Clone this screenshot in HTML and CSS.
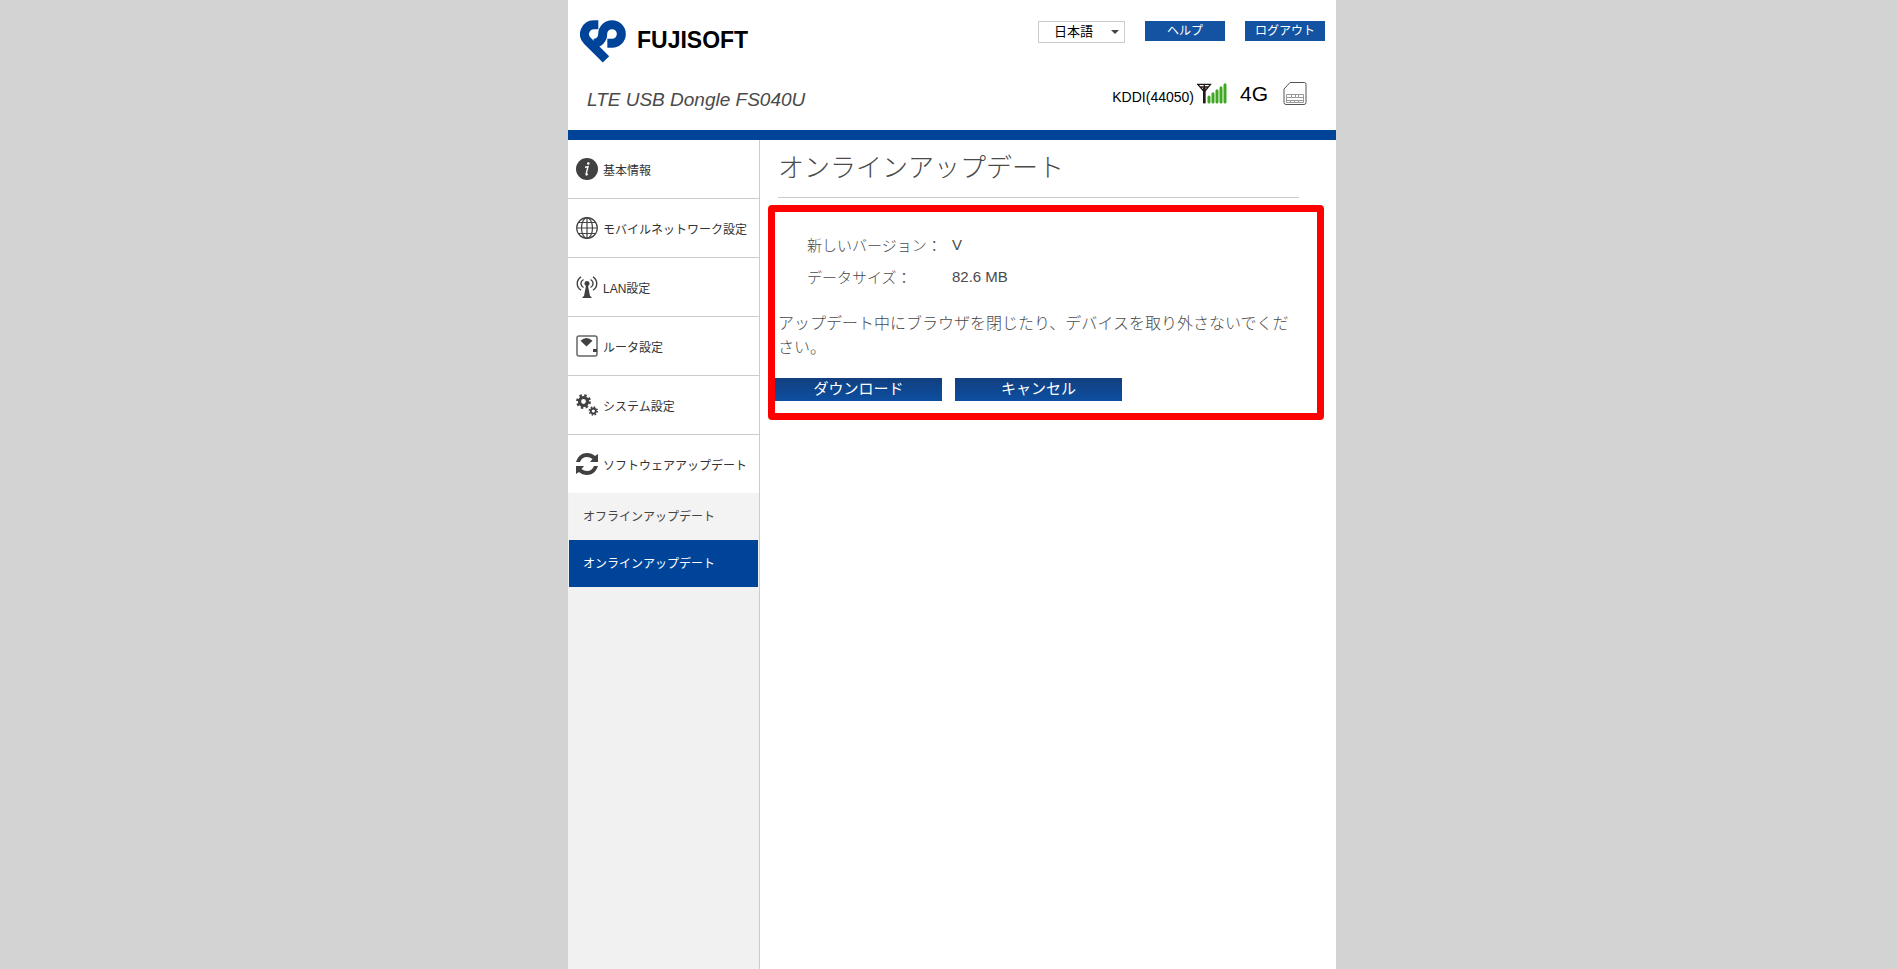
FILE: index.html
```html
<!DOCTYPE html>
<html lang="ja">
<head>
  <meta charset="UTF-8">
  <title>LTE USB Dongle FS040U</title>
  <meta name="viewport" content="width=device-width, initial-scale=1.0">
  <link rel="stylesheet" href="styles.css">
</head>
<body>
  <div class="page">
    <header class="header">
      <div class="header-top">
        <a href="#" class="logo">
          <svg width="46" height="43" viewBox="0 0 138 129" aria-hidden="true" fill="none" stroke="#004499" stroke-width="27">
            <path d="M55 14H42a28 28 0 0 0-20 48l56 56"/>
            <path d="M82 70h14a28 28 0 0 0 0-56a28 28 0 0 0-28 28a27 27 0 0 1-27 28"/>
          </svg>
          <span>FUJISOFT</span>
        </a>
        <div class="header-tools">
          <div class="lang">
            <select id="langSelect" aria-label="言語">
              <option>日本語</option>
              <option>English</option>
            </select>
          </div>
          <button class="small-btn" type="button">ヘルプ</button>
          <button class="small-btn" type="button">ログアウト</button>
        </div>
      </div>
      <div class="header-status">
        <div class="product">LTE USB Dongle FS040U</div>
        <div class="status">
          <span class="carrier">KDDI(44050)</span>
          <svg class="signal" width="30" height="21" viewBox="0 0 90 63" aria-hidden="true">
            <path d="M0 4h43M3 5l17 19M40 5L24 24M22 3v20M10 12h24" fill="none" stroke="#231815" stroke-width="4"/>
            <path d="M22 14v47" stroke="#231815" stroke-width="8"/>
            <path d="M36 42v15M48 32v25M60 23v34M72 14v43M84 5v52" stroke="#3fa720" stroke-width="9" stroke-linecap="round"/>
          </svg>
          <span class="network">4G</span>
          <svg width="24" height="24" viewBox="0 0 24 24" fill="none" stroke="#555" aria-hidden="true">
            <path d="M7 1.500h14.500q1.500 0 1.500 2v18q0 2-2 2h-18q-2 0-2-2V8z"/>
            <path d="M3.500 13.500h17v8h-17zM3.500 16.500h5v-3M12.500 16.500v-3M8.500 16.500h7v-3M15.500 16.500h5M3.500 19.500h17M7.500 19.500v2M11.500 19.500v2M15.500 19.500v2" stroke="#999"/>
          </svg>
        </div>
      </div>
    </header>

    <div class="content">
      <nav class="sidebar">
        <a href="#" class="menu-item">
          <svg width="22" height="22" viewBox="0 0 22 22">
            <circle cx="11" cy="11" r="11" fill="#414141"/>
            <circle cx="12.300" cy="5.500" r="1.300" fill="#fff"/>
            <path d="M9 9.200l3-.5-1.900 7.500q-.2 1 .5.700l1.300-1" fill="none" stroke="#fff" stroke-width="1.400"/>
          </svg>
          <span>基本情報</span>
        </a>
        <a href="#" class="menu-item">
          <svg width="22" height="22" viewBox="0 0 22 22" fill="none" stroke="#414141" stroke-width="1.200">
            <circle cx="11" cy="11" r="10.300"/>
            <ellipse cx="11" cy="11" rx="5.500" ry="10.300"/>
            <path d="M11 1v20M1 11h20M2.500 5.500h17M2.500 16.500h17"/>
          </svg>
          <span>モバイルネットワーク設定</span>
        </a>
        <a href="#" class="menu-item">
          <svg width="22" height="22" viewBox="0 0 22 22" fill="none" stroke="#414141" stroke-width="1.400">
            <path d="M5 .800C0 4 0 11 5 14.200M7.500 3.500c-3.500 2-3.500 6 0 8M17 .800c5 3.200 5 10.200 0 13.400M14.500 3.500c3.500 2 3.500 6 0 8"/>
            <circle cx="11" cy="7.500" r="2.500" fill="#414141" stroke="none"/>
            <path d="M10.300 8h1.400l2.300 12 1.500 1v1h-9v-1l1.500-1z" fill="#414141" stroke="none"/>
          </svg>
          <span>LAN設定</span>
        </a>
        <a href="#" class="menu-item">
          <svg width="22" height="22" viewBox="0 0 22 22">
            <rect x="1" y="1" width="20" height="20" rx="2" fill="none" stroke="#666" stroke-width="1.500"/>
            <path d="M4.500 5.800Q10.500 0 16.500 5.800L10.500 11.500z" fill="#414141"/>
            <rect x="17" y="14" width="4" height="3" fill="#414141"/>
          </svg>
          <span>ルータ設定</span>
        </a>
        <a href="#" class="menu-item">
          <svg width="22" height="22" viewBox="0 0 22 22" fill="none" stroke="#414141">
            <circle cx="7.500" cy="7.500" r="4" stroke-width="3.200"/>
            <circle cx="7.500" cy="7.500" r="6.200" stroke-width="2.400" stroke-dasharray="2.435"/>
            <circle cx="17.300" cy="17" r="2.500" stroke-width="1.800"/>
            <circle cx="17.300" cy="17" r="3.900" stroke-width="1.600" stroke-dasharray="1.532"/>
          </svg>
          <span>システム設定</span>
        </a>
        <a href="#" class="menu-item open">
          <svg width="22" height="22" viewBox="0 0 22 22" fill="#414141">
            <path d="M0 9C2 3 6 0 11 0c3 0 6 1 8 3l3-2v8h-8l2.500-3Q14 4 11 4 6 4 4 9z"/>
            <path d="M22 13c-2 6-6 9-11 9-3 0-6-1-8-3l-3 2v-8h8l-2.500 3Q8 18 11 18q5 0 7-5z"/>
          </svg>
          <span>ソフトウェアアップデート</span>
        </a>
        <a href="#" class="sub-item">オフラインアップデート</a>
        <a href="#" class="sub-item active">オンラインアップデート</a>
      </nav>

      <main class="main">
        <h1>オンラインアップデート</h1>
        <section class="update-box">
          <table class="info">
            <tr>
              <th scope="row">新しいバージョン：</th>
              <td>V</td>
            </tr>
            <tr>
              <th scope="row">データサイズ：</th>
              <td>82.6 MB</td>
            </tr>
          </table>
          <p>アップデート中にブラウザを閉じたり、デバイスを取り外さないでください。</p>
          <div class="actions">
            <button class="main-btn" type="button">ダウンロード</button>
            <button class="main-btn" type="button">キャンセル</button>
          </div>
        </section>
      </main>
    </div>
  </div>
</body>
</html>
```
FILE: styles.css
```css
:root {
  --blue: #004499;
  --line: #cccccc;
  --text: #4a4a4a;
}

* {
  box-sizing: border-box;
}

body {
  margin: 0;
  padding-left: 6px;
  background: #d3d3d3;
  color: var(--text);
  font-family: "Liberation Sans", "Noto Sans CJK JP", sans-serif;
}

.page {
  display: flex;
  flex-direction: column;
  max-width: 768px;
  min-height: 100vh;
  margin: 0 auto;
  background: #fff;
}

/* header */
.header {
  border-bottom: 10px solid var(--blue);
}

.header-top {
  display: flex;
  justify-content: space-between;
  align-items: flex-start;
  padding: 20px 11px 0 12px;
}

.logo {
  display: flex;
  align-items: center;
  gap: 11px;
  color: #000;
  font-size: 23px;
  font-weight: bold;
  line-height: 40px;
  text-decoration: none;
}

.logo span {
  padding-bottom: 3px;
}

.header-tools {
  display: flex;
  gap: 20px;
  padding-top: 1px;
}

.lang {
  position: relative;
}

.lang::after {
  content: "";
  position: absolute;
  top: 9px;
  right: 6px;
  border: 4px solid transparent;
  border-top-color: #444;
  border-bottom: none;
  pointer-events: none;
}

.lang select {
  display: block;
  width: 87px;
  height: 22px;
  padding: 0 15px 2px;
  border: 1px solid var(--line);
  border-radius: 0;
  background: #fff;
  color: #000;
  font-family: inherit;
  font-size: 13px;
  appearance: none;
}

.small-btn {
  width: 80px;
  height: 20px;
  padding: 0;
  border: none;
  background: #1453a1;
  color: #fff;
  font-family: inherit;
  font-size: 12px;
  line-height: 18px;
  cursor: pointer;
}

.header-status {
  display: flex;
  justify-content: space-between;
  height: 67px;
  padding: 18px 29px 0 19px;
}

.product {
  padding-top: 8px;
  font-size: 19px;
  font-style: italic;
  line-height: 22px;
}

.status {
  display: flex;
  align-items: center;
  height: 24px;
  color: #000;
}

.carrier {
  padding-top: 8px;
  font-size: 14px;
}

.signal {
  margin: 0 13px 0 3px;
}

.network {
  padding-top: 2px;
  margin-right: 15px;
  font-size: 21px;
}

/* sidebar */
.content {
  display: flex;
  flex: 1;
}

.sidebar {
  flex: 0 0 192px;
  border-right: 1px solid var(--line);
  background: #f1f1f1;
  font-size: 12px;
}

.menu-item {
  display: flex;
  align-items: center;
  gap: 5px;
  height: 59px;
  padding-left: 8px;
  border-bottom: 1px solid var(--line);
  background: #fff;
  color: #333;
  text-decoration: none;
}

.menu-item.open {
  height: 58px;
  border-bottom: none;
}

.sub-item {
  display: block;
  height: 47px;
  margin: 0 1px;
  padding-left: 14px;
  background: #f3f3f3;
  color: #444;
  line-height: 48px;
  text-decoration: none;
}

.sub-item.active {
  background: var(--blue);
  color: #fff;
}

/* main */
.main {
  flex: 1;
  min-width: 0;
  padding: 0 12px 0 8px;
  font-weight: 300;
}

h1 {
  margin: 0 25px 7px 10px;
  padding: 4px 0 5px;
  border-bottom: 1px solid var(--line);
  font-size: 26px;
  font-weight: 300;
  line-height: 48px;
}

.update-box {
  padding: 16px 23px 12px 0;
  border: 7px solid #ff0000;
  border-radius: 4px;
}

.info {
  margin-left: 32px;
  border-collapse: collapse;
  font-size: 15px;
}

.info th,
.info td {
  height: 32px;
  padding: 0;
  font-weight: 300;
  text-align: left;
}

.info th {
  width: 145px;
}

.update-box p {
  margin: 20px 0 18px 3px;
  font-size: 16px;
  line-height: 24px;
}

.actions {
  display: flex;
  gap: 13px;
}

.main-btn {
  width: 167px;
  height: 23px;
  padding: 0 0 2px;
  border: none;
  background: linear-gradient(#123f7f, #0c4fa1);
  color: #fff;
  font-family: inherit;
  font-size: 15px;
  line-height: 21px;
  cursor: pointer;
}
```
